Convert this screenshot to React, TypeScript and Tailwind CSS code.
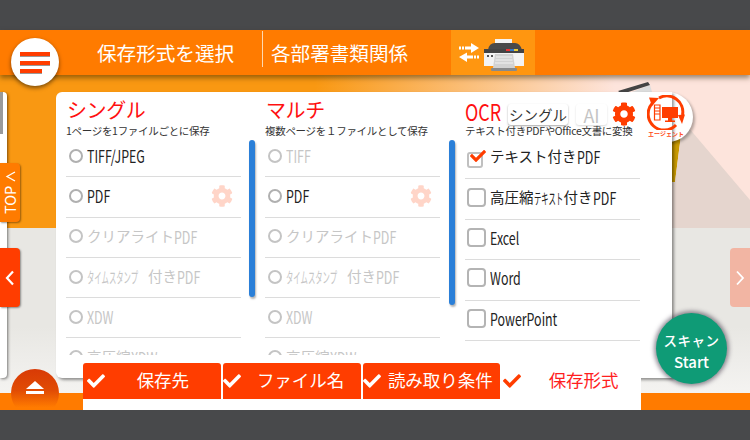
import React from "react";
import { FaCheck, FaCog } from "react-icons/fa";

// narrow latin parts of the list labels
const Lat = ({ w, children }: { w: string; children: React.ReactNode }) => (
  <span className={`inline-block shrink-0 origin-left scale-x-[0.73] text-[17px] whitespace-nowrap ${w}`}>{children}</span>
);

const Squeezed = ({ w, children }: { w: string; children: React.ReactNode }) => (
  <span className={`inline-block shrink-0 origin-left scale-x-[0.49] text-[15px] whitespace-nowrap ${w}`}>{children}</span>
);

const Pdf = () => <Lat w="w-[23px]">PDF</Lat>;

const labels: Record<string, React.ReactNode> = {
  tiffjpeg: <Lat w="w-[58px]">TIFF/JPEG</Lat>,
  tiff: <Lat w="w-[24px]">TIFF</Lat>,
  pdf: <Pdf />,
  clear: <>クリアライト<Pdf /></>,
  stamp: <><Squeezed w="w-[61px]">タイムスタンプ</Squeezed>付き<Pdf /></>,
  xdw: <Lat w="w-[29px]">XDW</Lat>,
  hxdw: <>高圧縮<Lat w="w-[29px]">XDW</Lat></>,
  textpdf: <>テキスト付き<Pdf /></>,
  htext: <>高圧縮<Squeezed w="w-[30px]">テキスト</Squeezed>付き<Pdf /></>,
  excel: <Lat w="w-[31px]">Excel</Lat>,
  word: <Lat w="w-[32px]">Word</Lat>,
  ppt: <Lat w="w-[68px]">PowerPoint</Lat>,
};

const RadioRow = ({ id, dim, gear }: { id: string; dim?: boolean; gear?: boolean }) => (
  <div className="h-[40.3px] shrink-0 border-b border-[#dcdcdc] flex items-center pl-[3px] pr-[8px] pb-[2px]">
    <span className={`size-[14px] rounded-full border-2 bg-white shrink-0 ${dim ? "border-[#c4c4c4]" : "border-[#b0b0b0]"}`} />
    <span className={`ml-[4px] flex-1 flex items-center text-[14.5px] leading-none whitespace-nowrap ${dim ? "text-[#c6c6c6]" : "text-[#222]"}`}>
      {labels[id]}
    </span>
    {gear && <FaCog className="text-[#ffd5c8] size-[22px] mt-[1px]" />}
  </div>
);

const Column = ({ title, sub, rows, active }: { title: string; sub: string; rows: string[]; active: string[] }) => (
  <div className="w-[175px] shrink-0">
    <div className="pl-[1px] h-[29px] pt-[7px] text-[20px] leading-[22px] text-[#ff1010] tracking-[-0.4px]">{title}</div>
    <div className="h-[19px] pt-[4px] text-[10.5px] leading-[12px] text-[#333] whitespace-nowrap tracking-[-0.3px]">{sub}</div>
    <div className="-mt-[3px] h-[218px] overflow-hidden">
      {rows.map((row) => (
        <RadioRow key={row} id={row} dim={!active.includes(row)} gear={row === "pdf"} />
      ))}
    </div>
  </div>
);

const CheckRow = ({ id, checked }: { id: string; checked?: boolean }) => (
  <div className="h-[40.4px] shrink-0 border-b border-[#dcdcdc] flex items-center pl-[2px] pb-[4px]">
    <span className="w-[19px] shrink-0 flex">
      {checked ? (
        <span className="relative mt-[6px] size-[16px] rounded-[3px] border-2 border-[#c0c0c0] bg-white">
          <FaCheck className="absolute -top-[6px] left-[1px] size-[16px] text-[#ff3d00]" />
        </span>
      ) : (
        <span className="size-[19px] rounded-[4px] border-2 border-[#b4b4b4] bg-white" />
      )}
    </span>
    <span className="ml-[4px] flex items-center text-[14.5px] leading-none text-[#222] whitespace-nowrap">{labels[id]}</span>
  </div>
);

const Printer = () => (
  <svg width="44" height="34" viewBox="0 0 44 34">
    <rect x="13" y="1" width="17" height="7" fill="#f4f4f4" />
    <path d="M6 12 Q7 5 13 5 H33 Q38 5 40 12 Z" fill="#4a4a4a" />
    <rect x="2" y="11" width="40" height="4" fill="#444" />
    <rect x="24" y="11" width="4" height="2" fill="#e33" />
    <rect x="28" y="11" width="4" height="2" fill="#37c" />
    <rect x="32" y="11" width="4" height="2" fill="#ec3" />
    <rect x="2" y="15" width="40" height="13" fill="#f3f3f3" />
    <rect x="5" y="17" width="2" height="2" fill="#555" />
    <rect x="9" y="17" width="2" height="2" fill="#555" />
    <path d="M13 16 H31 L33 30 H11 Z" fill="#d2d2d2" />
    <path d="M14 19 H30 M13.500 22 H30.500 M13 25 H31" stroke="#f2f2f2" strokeWidth="1" />
    <rect x="9" y="30" width="26" height="3" rx="1" fill="#8a8a8a" />
  </svg>
);

const Arrows = () => (
  <svg width="20" height="20" viewBox="0 0 20 20" fill="#fff">
    <path d="M0 3.500 H2 V6.500 H0 Z M3 3.500 H5 V6.500 H3 Z M6 3.500 H12 V0 L20 5 L12 10 V6.500 H6 Z" />
    <path d="M20 12.500 H18 V15.500 H20 Z M17 12.500 H15 V15.500 H17 Z M14 12.500 H8 V9.500 L0 14 L8 19 V15.500 H14 Z" />
  </svg>
);

const AgentIcon = () => (
  <svg width="38" height="35" viewBox="0 0 38 35" className="block">
    <path d="M12 3 A16 16 0 0 1 35.500 20" fill="none" stroke="#ff3d00" strokeWidth="3" />
    <path d="M31 20 L38 19.500 L35 29 Z" fill="#ff3d00" />
    <path d="M29 30 A16 16 0 0 1 5.500 8" fill="none" stroke="#ff3d00" strokeWidth="3" />
    <path d="M2 2.500 L12 3 L5 11 Z" fill="#ff3d00" />
    <path d="M7.500 10 H13 V25 H7.500 Z M8 13 H13 M8 16 H13 M8 19 H13" fill="none" stroke="#ff3d00" strokeWidth="1.200" />
    <rect x="15" y="12" width="16" height="11" fill="#ff3d00" />
    <path d="M21 23 H25 V25.500 H28 V27 H18 V25.500 H21 Z" fill="#ff3d00" />
  </svg>
);

const Tab = ({ label, active, checkClass }: { label: string; active?: boolean; checkClass: string }) => (
  <div className={`h-[36px] flex items-center rounded-t-[3px] ${active ? "w-[139px] bg-white text-[#ff1f1f]" : "w-[138px] bg-[#ff3d00] text-white"}`}>
    <FaCheck className={`size-[18px] shrink-0 ${checkClass} ${active ? "text-[#ff3d00]" : "text-white"}`} />
    <span className={`flex-1 text-center text-[17.5px] pb-[2px] whitespace-nowrap ${active ? "pl-[5px]" : ""}`}>{label}</span>
  </div>
);

export default function App() {
  return (
    <div className="relative w-[750px] h-[440px] overflow-hidden flex flex-col bg-[#48494b] font-['Noto_Sans_CJK_JP','Noto_Sans',sans-serif]">
      <div className="h-[30px] shrink-0" />

      {/* header */}
      <header className="relative z-10 h-[45px] shrink-0 bg-[#ff7b00] flex items-center shadow-[0_3px_5px_rgba(60,40,0,0.5)]">
        <div className="w-[97px]" />
        <span className="w-[165px] text-[19.6px] text-white whitespace-nowrap">保存形式を選択</span>
        <div className="w-px h-[36px] -mt-[7px] bg-[#ffd9b0]" />
        <span className="w-[180px] pl-[8px] text-[19.6px] text-white whitespace-nowrap">各部署書類関係</span>
        <div className="ml-[8px] w-[84px] h-full bg-[#ff9610] flex items-center pl-[8px] gap-[4px]">
          <Arrows />
          <div className="pt-[4px] -ml-[1px]">
            <Printer />
          </div>
        </div>
      </header>

      {/* main */}
      <main className="relative flex-1 flex items-start pt-[17px]">
        <div className="absolute inset-0 flex flex-col">
          <div className="h-[153px] bg-[linear-gradient(90deg,#f99812_0%,#f99812_42%,#fde4dc_82%,#fde4dc_100%)] shadow-[0_1px_2px_rgba(90,70,40,0.6)]" />
          <div className="flex-1 bg-[linear-gradient(180deg,#e8e7e3_60%,#f4f3f1_100%)]" />
        </div>

        {/* picture behind the panel */}
        <svg className="absolute left-0 top-0" width="750" height="153" viewBox="0 0 750 153">
          <path d="M620 17 H632 L650 10 L652 17 Z" fill="#dcdcdc" />
          <path d="M618 16 L648 7 L650 10 L622 19 Z" fill="#444" />
          <path d="M672 60 H681 L675 107 H672 Z" fill="#c99a00" />
          <path d="M688 52 L750 125 V153 H672 V107 H675 L681 60 Z" fill="#e5d5ce" />
        </svg>

        {/* agent bubble, behind the panel */}
        <div className="absolute left-[640px] top-[17px] w-[53px] h-[50px] bg-white rounded-r-[25px] rounded-bl-[25px] shadow-[2px_2px_3px_rgba(0,0,0,0.3)]" />

        <div className="relative w-[7px] h-[286px] bg-white rounded-r-[4px] shadow-[1px_1px_3px_rgba(0,0,0,0.5)]">
          <div className="w-[3px] h-[42px] bg-[#9a9a9a]" />
        </div>
        <div className="relative ml-[49px] w-[616px] h-[286px] bg-white rounded-l-[6px] shadow-[2px_2px_3px_rgba(0,0,0,0.4)] pl-[10px] flex overflow-hidden">
          <Column title="シングル" sub="1ページを1ファイルごとに保存" rows={["tiffjpeg", "pdf", "clear", "stamp", "xdw", "hxdw"]} active={["tiffjpeg", "pdf"]} />
          <div className="w-[24px] shrink-0 pl-[8px] pt-[48px]">
            <div className="w-[6px] h-[157px] rounded-full bg-[#2a7fd8] shadow-[1px_2px_2px_rgba(0,0,0,0.3)]" />
          </div>
          <Column title="マルチ" sub="複数ページを１ファイルとして保存" rows={["tiff", "pdf", "clear", "stamp", "xdw", "hxdw"]} active={["pdf"]} />
          <div className="w-[25px] shrink-0 pl-[9px] pt-[48px]">
            <div className="w-[6px] h-[165px] rounded-full bg-[#2a7fd8] shadow-[1px_2px_2px_rgba(0,0,0,0.3)]" />
          </div>
          <div className="w-[175px] shrink-0">
            <div className="h-[29px] flex items-start pt-[7px]">
              <span className="inline-block w-[43px] shrink-0 origin-left scale-x-[0.78] text-[23px] leading-[24px] text-[#ff1010]">OCR</span>
              <span className="w-[60px] h-[21px] shrink-0 mt-[5px] flex items-center justify-center rounded-[3px] bg-white text-[14.5px] leading-[18px] text-[#333] whitespace-nowrap shadow-[0_1px_2px_rgba(0,0,0,0.35)]">シングル</span>
              <span className="ml-[8px] w-[31px] h-[21px] shrink-0 mt-[5px] flex items-center justify-center rounded-[3px] bg-white text-[18px] leading-[18px] text-[#c4c4c4] shadow-[0_1px_2px_rgba(0,0,0,0.15)]">AI</span>
              <FaCog className="ml-[5px] mt-[3px] size-[24px] shrink-0 text-[#ff3d00]" />
            </div>
            <div className="h-[19px] pt-[4px] text-[10.5px] leading-[12px] text-[#333] whitespace-nowrap tracking-[-0.3px]">テキスト付きPDFやOffice文書に変換</div>
            <div className="-mt-[1px]">
              <CheckRow id="textpdf" checked />
              <CheckRow id="htext" />
              <CheckRow id="excel" />
              <CheckRow id="word" />
              <CheckRow id="ppt" />
            </div>
          </div>
        </div>

        {/* agent icon over the panel */}
        <div className="absolute left-[647px] top-[20px] w-[38px] flex flex-col items-center">
          <AgentIcon />
          <span className="-mt-[1px] text-[6px] leading-[9px] font-bold text-[#ff4a14] whitespace-nowrap">エージェント</span>
        </div>

        {/* side tabs */}
        <div className="absolute left-0 top-[88px] w-[20px] h-[59px] bg-[#ff7b00] rounded-r-[4px] shadow-[1px_1px_2px_rgba(0,0,0,0.4)] flex flex-col items-center pt-[8px]">
          <svg width="11" height="11" viewBox="0 0 11 11"><path d="M10 1 L2 5.500 L10 10" fill="none" stroke="#fff" strokeWidth="1.300" /></svg>
          <span className="mt-[11px] -rotate-90 text-[14.5px] leading-[14px] text-white whitespace-nowrap">TOP</span>
        </div>
        <div className="absolute left-0 top-[173px] w-[20px] h-[59px] bg-[#ff3d00] rounded-r-[4px] shadow-[1px_1px_2px_rgba(0,0,0,0.4)] flex items-center justify-center">
          <svg width="10" height="16" viewBox="0 0 10 16"><path d="M8 1.500 L2 8 L8 14.500" fill="none" stroke="#fff" strokeWidth="2.200" /></svg>
        </div>
        <div className="absolute right-0 top-[173px] w-[20px] h-[59px] bg-[#f2b5a3] rounded-l-[4px] flex items-center justify-center">
          <svg width="10" height="16" viewBox="0 0 10 16"><path d="M2 1.500 L8 8 L2 14.500" fill="none" stroke="#fff" strokeWidth="1.800" /></svg>
        </div>

        {/* start button */}
        <div className="absolute left-[656px] top-[238px] size-[71px] rounded-full bg-[#0f9b76] shadow-[0_0_4px_2px_rgba(40,30,50,0.5)] flex flex-col items-center justify-center pt-[4px] text-white font-medium">
          <span className="text-[13.5px] leading-[22px] tracking-[0.5px]">スキャン</span>
          <span className="text-[15px] leading-[22px]">Start</span>
        </div>
      </main>

      {/* footer strip */}
      <div className="h-[17px] shrink-0 bg-[#ff7b00]" />
      <div className="h-[30px] shrink-0" />

      {/* eject button */}
      <div className="absolute left-[11px] top-[369px] w-[48px] h-[41px] overflow-hidden">
        <div className="size-[48px] rounded-full bg-[linear-gradient(180deg,#d83a06_0%,#e14c04_45%,#ff7b00_80%)] flex flex-col items-center pt-[12px]">
          <svg width="18" height="13" viewBox="0 0 18 13" fill="#fff"><path d="M9 0 L18 8 H0 Z M0 10 H18 V13 H0 Z" /></svg>
        </div>
      </div>

      {/* menu button */}
      <div className="absolute z-20 left-[11px] top-[38px] size-[48px] rounded-full bg-white shadow-[0_2px_4px_rgba(0,0,0,0.5)] flex flex-col justify-center pl-[9px] pt-[2px] gap-[3.500px]">
        <div className="w-[30px] h-[5px] bg-[#ff3d00] border-b border-[#999]" />
        <div className="w-[30px] h-[5px] bg-[#ff3d00] border-b border-[#999]" />
        <div className="w-[22px] h-[5px] bg-[#ff3d00] border-b border-[#999]" />
      </div>

      {/* step tabs */}
      <div className="absolute left-[83px] top-[363px] w-[558px] h-[47px] bg-white flex gap-[2px] items-start">
        <Tab label="保存先" checkClass="ml-[4px]" />
        <Tab label="ファイル名" checkClass="ml-0" />
        <Tab label="読み取り条件" checkClass="ml-0" />
        <Tab label="保存形式" active checkClass="ml-[1px]" />
      </div>
    </div>
  );
}
